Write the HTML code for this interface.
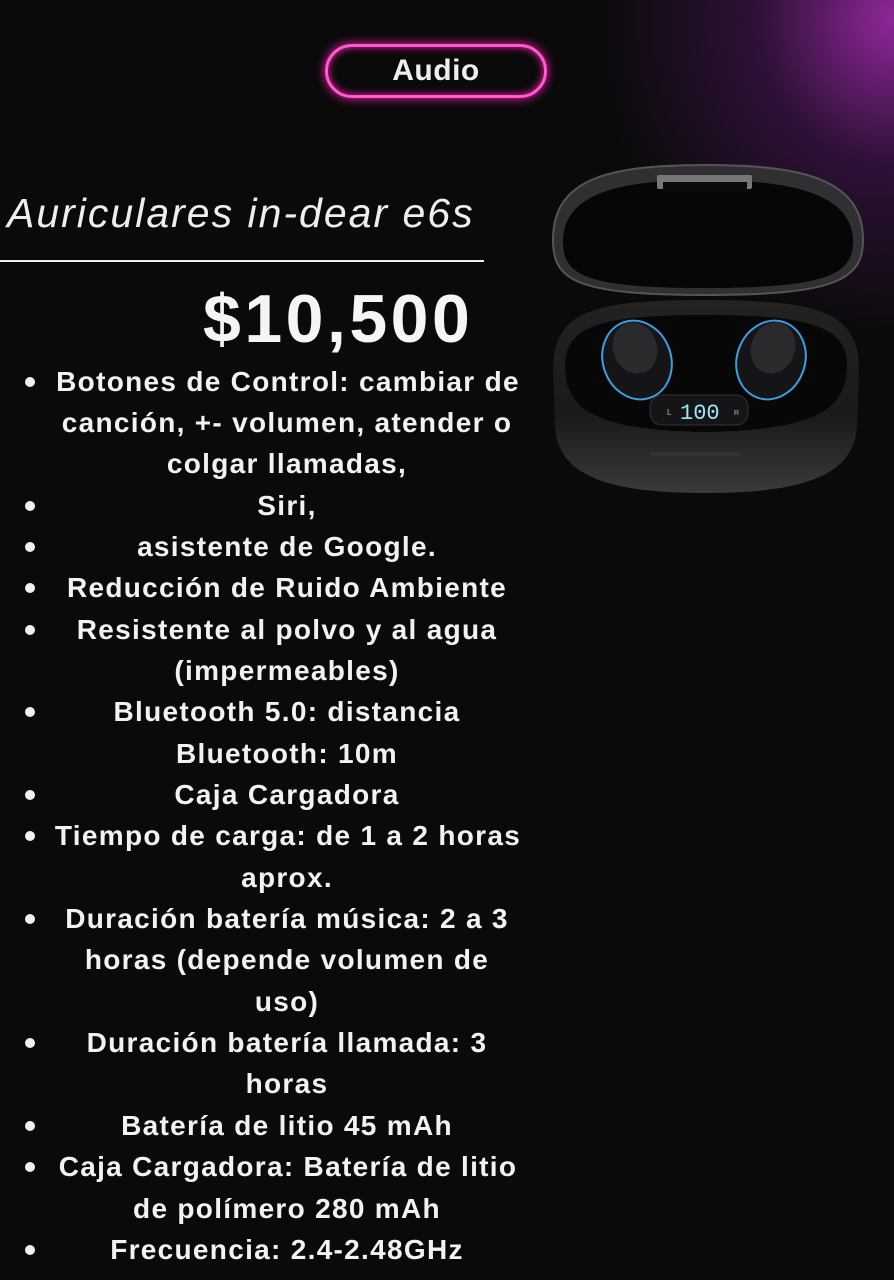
<!DOCTYPE html>
<html><head><meta charset="utf-8"><style>
body{margin:0;width:894px;height:1280px;overflow:hidden;background:#0a0a0a;font-family:"Liberation Sans",sans-serif;color:#f2f2f2;position:relative}
.bg{position:absolute;inset:0;background:radial-gradient(ellipse 300px 320px at 894px 20px,rgba(150,40,160,.95),rgba(90,25,110,.45) 45%,rgba(10,10,10,0) 100%)}
.pill{position:absolute;left:325px;top:44px;width:216px;height:48px;border:3px solid #ff5ad0;border-radius:28px;box-shadow:0 0 10px #ff1fb0,inset 0 0 8px #ff1fb0;text-align:center;line-height:48px;font-weight:bold;font-size:30px;color:#eee;letter-spacing:.5px}
.title{position:absolute;left:7px;top:190px;font-size:41px;font-style:italic;font-weight:300;color:#eee;letter-spacing:2px}
.rule{position:absolute;left:0;top:260px;width:484px;height:2px;background:#eee}
.price{position:absolute;left:203px;top:280px;font-size:68px;font-weight:bold;color:#f5f5f5;letter-spacing:3.5px}
.l{position:absolute;left:40px;width:494px;text-align:center;font-weight:bold;font-size:28px;letter-spacing:1.3px;height:41px;line-height:41px;white-space:nowrap}
.b{position:absolute;left:25px;width:10px;height:10px;border-radius:50%;background:#f2f2f2;margin-top:16px}
</style></head><body>
<div class="bg"></div>
<div class="pill">Audio</div>
<div class="title">Auriculares in-dear e6s</div>
<div class="rule"></div>
<div class="price">$10,500</div>
<svg style="position:absolute;left:545px;top:160px" width="325" height="340" viewBox="0 0 325 340">
<defs><linearGradient id="g2" x1="0" y1="0" x2="0" y2="1"><stop offset="0" stop-color="#222"/><stop offset=".6" stop-color="#1a1a1b"/><stop offset="1" stop-color="#3a3a3c"/></linearGradient></defs>
<path d="M8 80 C8 20 60 5 160 5 C260 5 318 20 318 80 C318 120 290 135 160 135 C30 135 8 120 8 80Z" fill="#303033" stroke="#555" stroke-width="2"/>
<path d="M18 82 C18 35 70 20 160 20 C250 20 308 35 308 82 C308 115 280 128 160 128 C40 128 18 115 18 82Z" fill="#060606"/>
<rect x="112" y="15" width="95" height="14" fill="#777" rx="2"/>
<rect x="118" y="22" width="84" height="10" fill="#0b0b0b"/>
<path d="M8 210 C8 150 50 140 160 140 C270 140 314 150 314 210 L312 265 C310 315 260 333 160 333 C60 333 12 315 10 265Z" fill="url(#g2)"/>
<path d="M20 205 C20 165 60 155 160 155 C260 155 302 165 302 205 C302 250 270 270 160 272 C50 270 20 250 20 205Z" fill="#070707"/>
<ellipse cx="92" cy="200" rx="34" ry="40" fill="#151517" stroke="#3aa0e0" stroke-width="2" transform="rotate(-20 92 200)"/>
<ellipse cx="90" cy="188" rx="22" ry="26" fill="#2a2a2d" transform="rotate(-20 90 188)"/>
<ellipse cx="226" cy="200" rx="34" ry="40" fill="#151517" stroke="#3aa0e0" stroke-width="2" transform="rotate(20 226 200)"/>
<ellipse cx="228" cy="188" rx="22" ry="26" fill="#2a2a2d" transform="rotate(20 228 188)"/>
<rect x="105" y="235" width="98" height="30" rx="12" fill="#151517" stroke="#333"/>
<text x="122" y="255" font-size="8" fill="#bbb" font-family="Liberation Sans">L</text>
<text x="135" y="259" font-size="22" fill="#9fe4f5" font-family="Liberation Mono">100</text>
<text x="189" y="255" font-size="7" fill="#bbb" font-family="Liberation Sans">R</text>
<rect x="105" y="292" width="90" height="4" rx="2" fill="#333"/>
</svg>
<div class="b" style="top:361px"></div><div class="l" style="top:361px;left:48px;width:480px">Botones de Control: cambiar de</div>
<div class="l" style="top:402px">canción, +- volumen, atender o</div>
<div class="l" style="top:443px">colgar llamadas,</div>
<div class="b" style="top:485px"></div><div class="l" style="top:485px">Siri,</div>
<div class="b" style="top:526px"></div><div class="l" style="top:526px">asistente de Google.</div>
<div class="b" style="top:567px"></div><div class="l" style="top:567px">Reducción de Ruido Ambiente</div>
<div class="b" style="top:609px"></div><div class="l" style="top:609px">Resistente al polvo y al agua</div>
<div class="l" style="top:650px">(impermeables)</div>
<div class="b" style="top:691px"></div><div class="l" style="top:691px">Bluetooth 5.0: distancia</div>
<div class="l" style="top:733px">Bluetooth: 10m</div>
<div class="b" style="top:774px"></div><div class="l" style="top:774px">Caja Cargadora</div>
<div class="b" style="top:815px"></div><div class="l" style="top:815px;left:48px;width:480px">Tiempo de carga: de 1 a 2 horas</div>
<div class="l" style="top:857px">aprox.</div>
<div class="b" style="top:898px"></div><div class="l" style="top:898px">Duración batería música: 2 a 3</div>
<div class="l" style="top:939px">horas (depende volumen de</div>
<div class="l" style="top:981px">uso)</div>
<div class="b" style="top:1022px"></div><div class="l" style="top:1022px">Duración batería llamada: 3</div>
<div class="l" style="top:1063px">horas</div>
<div class="b" style="top:1105px"></div><div class="l" style="top:1105px">Batería de litio 45 mAh</div>
<div class="b" style="top:1146px"></div><div class="l" style="top:1146px;left:48px;width:480px">Caja Cargadora: Batería de litio</div>
<div class="l" style="top:1188px">de polímero 280 mAh</div>
<div class="b" style="top:1229px"></div><div class="l" style="top:1229px">Frecuencia: 2.4-2.48GHz</div>
</body></html>
